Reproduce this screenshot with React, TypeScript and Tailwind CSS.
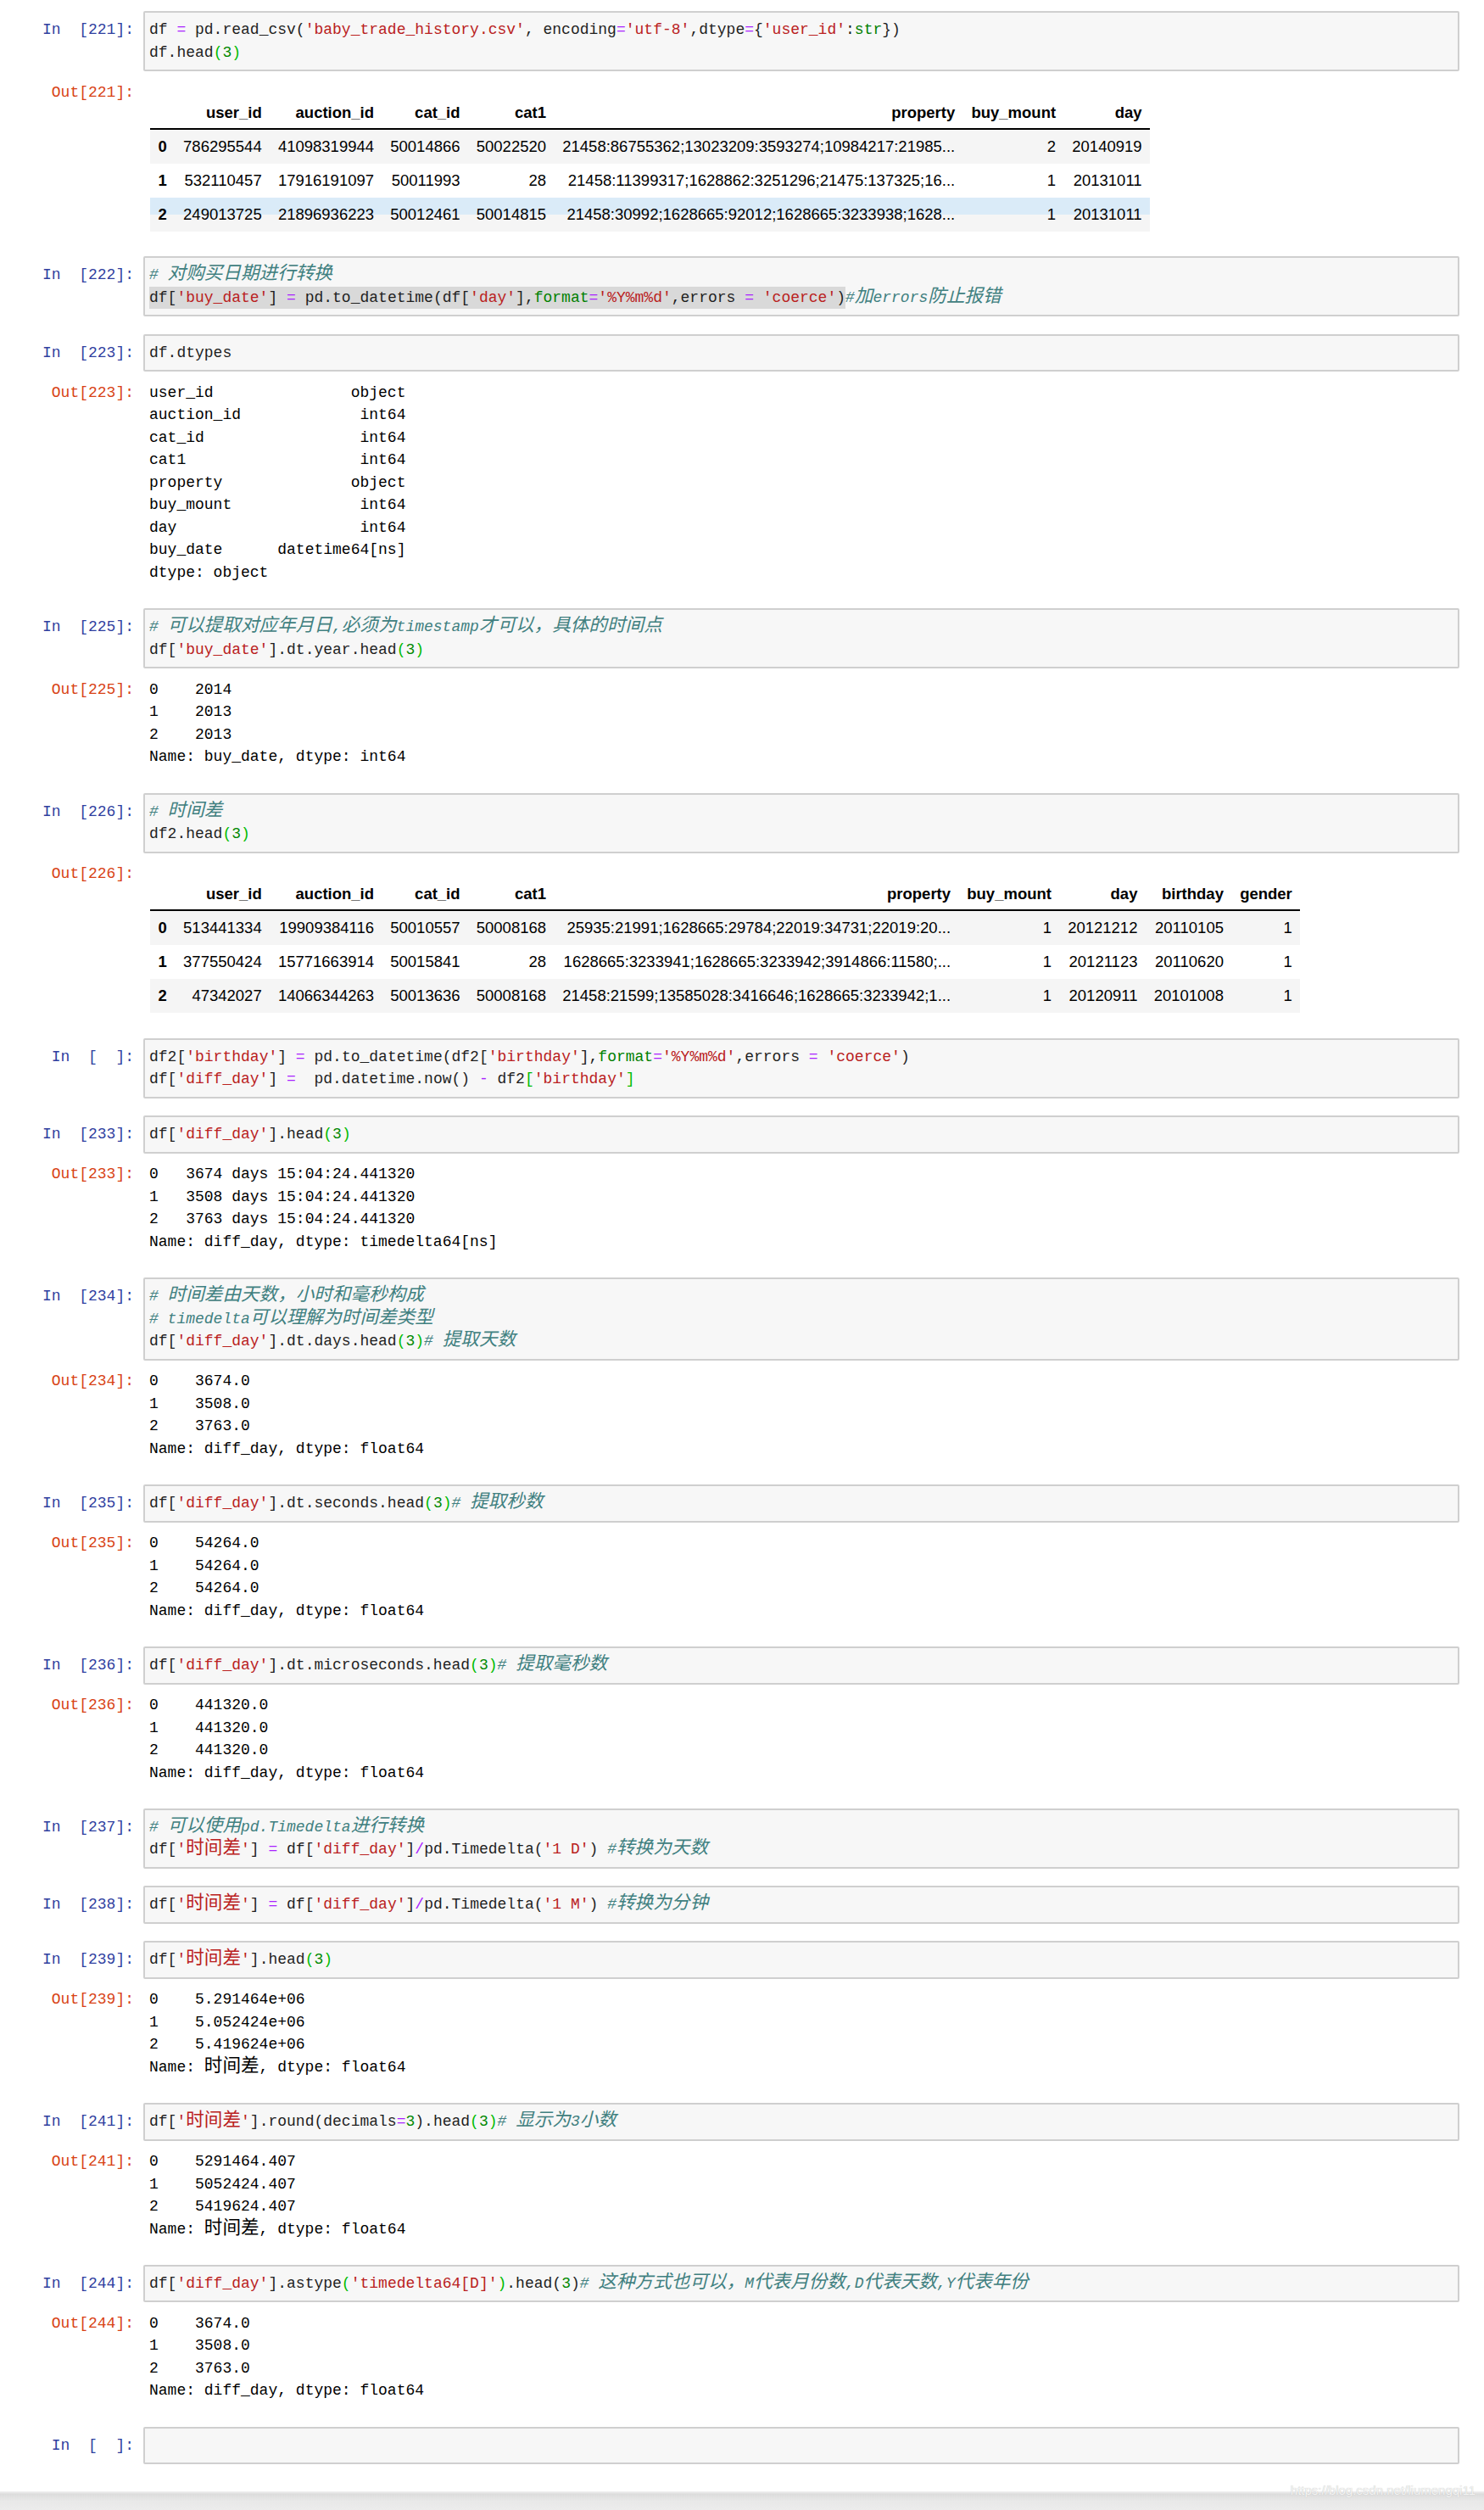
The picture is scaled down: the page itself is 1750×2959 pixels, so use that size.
import { Fragment } from "react";
import clsx from "clsx";

type Line = string | { sel: string; rest: string };
type Table = { cols: string[]; rows: string[][]; hover?: boolean };
type Cell = {
  p: string;
  code: Line[];
  out?: { p: string; text?: string[]; table?: Table };
};

const tone: Record<string, string> = {
  t: "text-[#1f1f1f]",
  o: "text-[#aa22ff]",
  s: "text-[#ba2121]",
  n: "text-[#008800]",
  b: "text-[#008000]",
  c: "text-[#408080] italic",
  m: "text-[#00bb00]",
};

// CJK runs get a wider size so that they sit on the double-width grid
function Cjk({ text }: { text: string }) {
  const parts = text.split(/([\u3000-\u303f\u4e00-\u9fff\uff00-\uffef]+)/);
  return (
    <>
      {parts.map((p, i) =>
        i % 2 ? (
          <span key={i} className="text-[21.6px] leading-[0px]">
            {p}
          </span>
        ) : (
          <Fragment key={i}>{p}</Fragment>
        )
      )}
    </>
  );
}

// "~(" marks a bracket that is shown as matched
function tokenize(src: string) {
  const out: [string, string][] = [];
  const push = (k: string, s: string) => {
    const last = out[out.length - 1];
    if (last && last[0] === k) last[1] += s;
    else out.push([k, s]);
  };
  let i = 0;
  while (i < src.length) {
    const ch = src[i];
    if (ch === "#") {
      push("c", src.slice(i));
      break;
    }
    if (ch === "~") {
      push("m", src[i + 1]);
      i += 2;
      continue;
    }
    if (ch === "'") {
      const j = src.indexOf("'", i + 1);
      push("s", src.slice(i, j + 1));
      i = j + 1;
      continue;
    }
    if ("=-/".includes(ch)) {
      push("o", ch);
      i++;
      continue;
    }
    if (/\d/.test(ch) && !/\w/.test(src[i - 1] ?? "")) {
      let j = i;
      while (j < src.length && /[\d.]/.test(src[j])) j++;
      push("n", src.slice(i, j));
      i = j;
      continue;
    }
    const w = /^[A-Za-z_]\w*/.exec(src.slice(i));
    if (w) {
      push(w[0] === "str" || w[0] === "format" ? "b" : "t", w[0]);
      i += w[0].length;
      continue;
    }
    push("t", ch);
    i++;
  }
  return out;
}

function Code({ src }: { src: string }) {
  return (
    <>
      {tokenize(src).map(([k, s], i) => (
        <span key={i} className={tone[k]}>
          <Cjk text={s} />
        </span>
      ))}
    </>
  );
}

const T1: Table = {
  cols: ["", "user_id", "auction_id", "cat_id", "cat1", "property", "buy_mount", "day"],
  rows: [
    ["0", "786295544", "41098319944", "50014866", "50022520", "21458:86755362;13023209:3593274;10984217:21985...", "2", "20140919"],
    ["1", "532110457", "17916191097", "50011993", "28", "21458:11399317;1628862:3251296;21475:137325;16...", "1", "20131011"],
    ["2", "249013725", "21896936223", "50012461", "50014815", "21458:30992;1628665:92012;1628665:3233938;1628...", "1", "20131011"],
  ],
  hover: true,
};

const T2: Table = {
  cols: ["", "user_id", "auction_id", "cat_id", "cat1", "property", "buy_mount", "day", "birthday", "gender"],
  rows: [
    ["0", "513441334", "19909384116", "50010557", "50008168", "25935:21991;1628665:29784;22019:34731;22019:20...", "1", "20121212", "20110105", "1"],
    ["1", "377550424", "15771663914", "50015841", "28", "1628665:3233941;1628665:3233942;3914866:11580;...", "1", "20121123", "20110620", "1"],
    ["2", "47342027", "14066344263", "50013636", "50008168", "21458:21599;13585028:3416646;1628665:3233942;1...", "1", "20120911", "20101008", "1"],
  ],
};

const series = (vals: string[], name: string, sep = "    ") => [
  ...vals.map((v, i) => `${i}${sep}${v}`),
  name,
];

const dtypes = [
  ["user_id", "object"],
  ["auction_id", "int64"],
  ["cat_id", "int64"],
  ["cat1", "int64"],
  ["property", "object"],
  ["buy_mount", "int64"],
  ["day", "int64"],
  ["buy_date", "datetime64[ns]"],
].map(([k, v]) => `${k.padEnd(28 - v.length)}${v}`);

const cells: Cell[] = [
  {
    p: "In  [221]:",
    code: ["df = pd.read_csv('baby_trade_history.csv', encoding='utf-8',dtype={'user_id':str})", "df.head~(3~)"],
    out: { p: "Out[221]:", table: T1 },
  },
  {
    p: "In  [222]:",
    code: [
      "# 对购买日期进行转换",
      { sel: "df['buy_date'] = pd.to_datetime(df['day'],format='%Y%m%d',errors = 'coerce')", rest: "#加errors防止报错" },
    ],
  },
  {
    p: "In  [223]:",
    code: ["df.dtypes"],
    out: { p: "Out[223]:", text: [...dtypes, "dtype: object"] },
  },
  {
    p: "In  [225]:",
    code: ["# 可以提取对应年月日,必须为timestamp才可以，具体的时间点", "df['buy_date'].dt.year.head~(3~)"],
    out: { p: "Out[225]:", text: series(["2014", "2013", "2013"], "Name: buy_date, dtype: int64") },
  },
  {
    p: "In  [226]:",
    code: ["# 时间差", "df2.head~(3~)"],
    out: { p: "Out[226]:", table: T2 },
  },
  {
    p: "In  [  ]:",
    code: [
      "df2['birthday'] = pd.to_datetime(df2['birthday'],format='%Y%m%d',errors = 'coerce')",
      "df['diff_day'] =  pd.datetime.now() - df2~['birthday'~]",
    ],
  },
  {
    p: "In  [233]:",
    code: ["df['diff_day'].head~(3~)"],
    out: {
      p: "Out[233]:",
      text: series(
        ["3674 days 15:04:24.441320", "3508 days 15:04:24.441320", "3763 days 15:04:24.441320"],
        "Name: diff_day, dtype: timedelta64[ns]",
        "   "
      ),
    },
  },
  {
    p: "In  [234]:",
    code: ["# 时间差由天数，小时和毫秒构成", "# timedelta可以理解为时间差类型", "df['diff_day'].dt.days.head~(3~)# 提取天数"],
    out: { p: "Out[234]:", text: series(["3674.0", "3508.0", "3763.0"], "Name: diff_day, dtype: float64") },
  },
  {
    p: "In  [235]:",
    code: ["df['diff_day'].dt.seconds.head~(3~)# 提取秒数"],
    out: { p: "Out[235]:", text: series(["54264.0", "54264.0", "54264.0"], "Name: diff_day, dtype: float64") },
  },
  {
    p: "In  [236]:",
    code: ["df['diff_day'].dt.microseconds.head~(3~)# 提取毫秒数"],
    out: { p: "Out[236]:", text: series(["441320.0", "441320.0", "441320.0"], "Name: diff_day, dtype: float64") },
  },
  {
    p: "In  [237]:",
    code: ["# 可以使用pd.Timedelta进行转换", "df['时间差'] = df['diff_day']/pd.Timedelta('1 D') #转换为天数"],
  },
  {
    p: "In  [238]:",
    code: ["df['时间差'] = df['diff_day']/pd.Timedelta('1 M') #转换为分钟"],
  },
  {
    p: "In  [239]:",
    code: ["df['时间差'].head~(3~)"],
    out: { p: "Out[239]:", text: series(["5.291464e+06", "5.052424e+06", "5.419624e+06"], "Name: 时间差, dtype: float64") },
  },
  {
    p: "In  [241]:",
    code: ["df['时间差'].round(decimals=3).head~(3~)# 显示为3小数"],
    out: { p: "Out[241]:", text: series(["5291464.407", "5052424.407", "5419624.407"], "Name: 时间差, dtype: float64") },
  },
  {
    p: "In  [244]:",
    code: ["df['diff_day'].astype~('timedelta64[D]'~).head(3)# 这种方式也可以，M代表月份数,D代表天数,Y代表年份"],
    out: { p: "Out[244]:", text: series(["3674.0", "3508.0", "3763.0"], "Name: diff_day, dtype: float64") },
  },
  { p: "In  [  ]:", code: [" "] },
];

function Frame({ t }: { t: Table }) {
  return (
    <table className="ml-[1px] mt-[17px] mb-[1px] border-separate border-spacing-0 font-['Liberation_Sans',Arial,sans-serif] text-[18.5px] leading-[22px] text-black">
      <thead>
        <tr>
          {t.cols.map((c, i) => (
            <th key={i} className="whitespace-nowrap border-b-2 border-black px-[9.6px] pt-[9px] pb-[7px] text-right font-bold">
              {c}
            </th>
          ))}
        </tr>
      </thead>
      <tbody>
        {t.rows.map((r, i) => (
          <tr key={i}>
            {r.map((v, j) => (
              <td
                key={j}
                className={clsx(
                  "whitespace-nowrap px-[9.6px] py-[9px] text-right",
                  j === 0 && "font-bold",
                  i === 1 && "bg-white",
                  i === 0 && "bg-[#f5f5f5]",
                  i === 2 && !t.hover && "bg-[#f5f5f5]",
                  i === 2 && t.hover && "bg-[linear-gradient(to_bottom,#daebf8_50%,#f5f5f5_50%)]"
                )}
              >
                {v}
              </td>
            ))}
          </tr>
        ))}
      </tbody>
    </table>
  );
}

function CodeLine({ line }: { line: Line }) {
  if (typeof line === "string") {
    return (
      <div className="whitespace-pre">
        <Code src={line} />
      </div>
    );
  }
  return (
    <div className="whitespace-pre">
      <span className="inline-block bg-[#d9d9d9] align-top">
        <Code src={line.sel} />
      </span>
      <Code src={line.rest} />
    </div>
  );
}

function NotebookCell({ cell }: { cell: Cell }) {
  return (
    <div className="flex flex-col">
      <div className="flex">
        <div className="w-[158px] shrink-0 whitespace-pre pt-[9px] text-right text-[#303f9f]">{cell.p}</div>
        <div className="ml-[11px] mr-[29px] flex-1 rounded-[2px] border-2 border-[#cfcfcf] bg-[#f7f7f7] px-[5px] py-[7px]">
          {cell.code.map((l, i) => (
            <CodeLine key={i} line={l} />
          ))}
        </div>
      </div>
      {cell.out && (
        <div className="mt-[11.5px] flex pb-[8.5px]">
          <div className="w-[158px] shrink-0 whitespace-pre text-right text-[#d84315]">{cell.out.p}</div>
          <div className="ml-[18px] text-black">
            {cell.out.text?.map((l, i) => (
              <div key={i} className="whitespace-pre">
                <Cjk text={l} />
              </div>
            ))}
            {cell.out.table && <Frame t={cell.out.table} />}
          </div>
        </div>
      )}
    </div>
  );
}

export default function App() {
  return (
    <div className="flex min-h-[2959px] flex-col bg-white font-['Liberation_Mono','Noto_Sans_CJK_SC',monospace] text-[18px] leading-[26.5px]">
      <div className="flex flex-col gap-[20.4px] pt-[13px]">
        {cells.map((c, i) => (
          <NotebookCell key={i} cell={c} />
        ))}
      </div>
      <div className="relative mt-auto h-[22px] bg-[linear-gradient(to_bottom,#f2f2f2,#dcdcdc_15%,#e8e8e8_50%,#ececec)]">
        <span className="absolute right-[10px] top-[-10px] font-['Liberation_Sans',Arial,sans-serif] text-[15px] leading-[18px] text-[#f4f4f4] [text-shadow:0_0_1px_#b5b5b5]">
          https://blog.csdn.net/liumengqi11
        </span>
      </div>
    </div>
  );
}
